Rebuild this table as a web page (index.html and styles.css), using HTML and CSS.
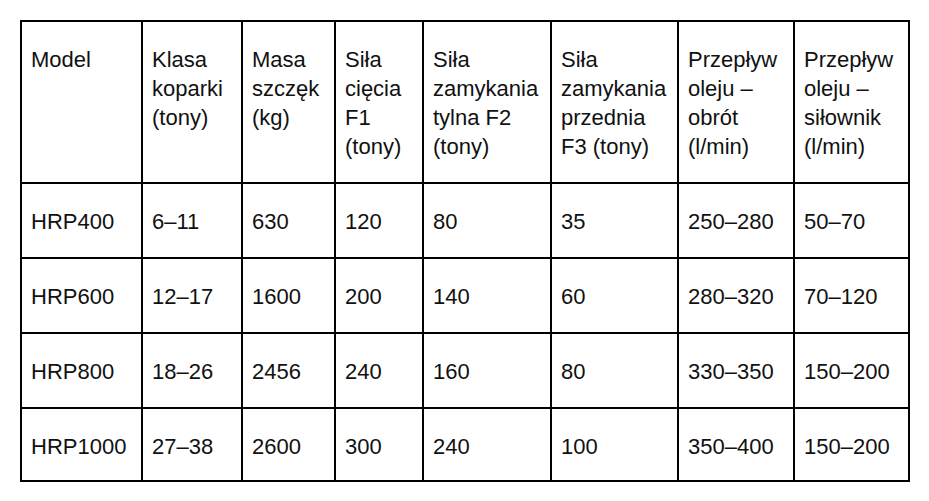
FILE: index.html
```html
<!DOCTYPE html>
<html lang="pl">
<head>
<meta charset="utf-8">
<title>HRP</title>
<link rel="stylesheet" href="styles.css">
</head>
<body>
<table class="spec">
  <colgroup>
    <col class="c1"><col class="c2"><col class="c3"><col class="c4">
    <col class="c5"><col class="c6"><col class="c7"><col class="c8">
  </colgroup>
  <thead>
    <tr>
      <th>Model</th>
      <th>Klasa koparki (tony)</th>
      <th>Masa szczęk (kg)</th>
      <th>Siła cięcia F1 (tony)</th>
      <th>Siła zamykania tylna F2 (tony)</th>
      <th>Siła zamykania przednia F3 (tony)</th>
      <th>Przepływ oleju – obrót (l/min)</th>
      <th>Przepływ oleju – siłownik (l/min)</th>
    </tr>
  </thead>
  <tbody>
    <tr><td>HRP400</td><td>6–11</td><td>630</td><td>120</td><td>80</td><td>35</td><td>250–280</td><td>50–70</td></tr>
    <tr><td>HRP600</td><td>12–17</td><td>1600</td><td>200</td><td>140</td><td>60</td><td>280–320</td><td>70–120</td></tr>
    <tr><td>HRP800</td><td>18–26</td><td>2456</td><td>240</td><td>160</td><td>80</td><td>330–350</td><td>150–200</td></tr>
    <tr><td>HRP1000</td><td>27–38</td><td>2600</td><td>300</td><td>240</td><td>100</td><td>350–400</td><td>150–200</td></tr>
  </tbody>
</table>
</body>
</html>
```
FILE: styles.css
```css
html, body {
  margin: 0;
  padding: 0;
  background: #ffffff;
}
body {
  padding: 20px;
  font-family: "Liberation Sans", Arial, sans-serif;
  color: #111111;
}
.spec {
  table-layout: fixed;
  width: 890px;
  border-collapse: separate;
  border-spacing: 0;
  border-left: 2px solid #000;
  border-top: 2px solid #000;
}
.c1 { width: 121px; }
.c2 { width: 100px; }
.c3 { width: 93px; }
.c4 { width: 88px; }
.c5 { width: 128px; }
.c6 { width: 127px; }
.c7 { width: 116px; }
.c8 { width: 115px; }
.spec th,
.spec td {
  font-size: 22px;
  line-height: 29px;
  font-weight: normal;
  text-align: left;
  vertical-align: top;
  padding: 23px 9px 21px 9px;
  border-right: 2px solid #000;
  border-bottom: 2px solid #000;
}
.spec tbody tr:last-child td {
  padding-bottom: 19px;
}
```
